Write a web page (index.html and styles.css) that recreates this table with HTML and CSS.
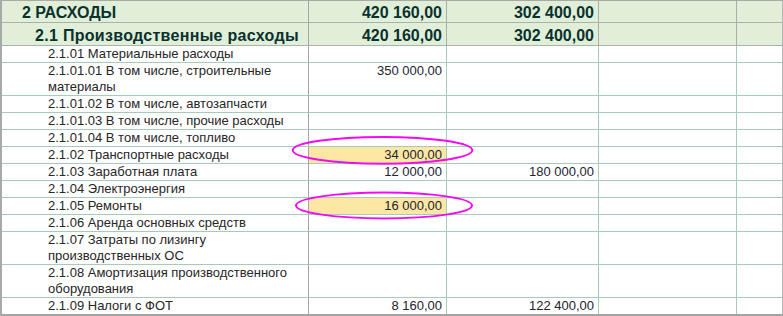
FILE: index.html
```html
<!DOCTYPE html>
<html lang="ru">
<head>
<meta charset="utf-8">
<link rel="stylesheet" href="styles.css">
</head>
<body>
<div class="sheet">
  <div class="grid">
    <div class="cell head lvl1 name c1">2 РАСХОДЫ</div>
    <div class="cell head lvl1 num">420 160,00</div>
    <div class="cell head lvl1 num">302 400,00</div>
    <div class="cell head lvl1"></div>
    <div class="cell head lvl1 last"></div>

    <div class="cell head lvl2 name c1">2.1 Производственные расходы</div>
    <div class="cell head lvl2 num">420 160,00</div>
    <div class="cell head lvl2 num">302 400,00</div>
    <div class="cell head lvl2"></div>
    <div class="cell head lvl2 last"></div>

    <div class="cell item c1">2.1.01 Материальные расходы</div>
    <div class="cell num"></div><div class="cell num"></div><div class="cell"></div><div class="cell last"></div>

    <div class="cell item c1">2.1.01.01 В том числе, строительные материалы</div>
    <div class="cell num">350 000,00</div><div class="cell num"></div><div class="cell"></div><div class="cell last"></div>

    <div class="cell item c1">2.1.01.02 В том числе, автозапчасти</div>
    <div class="cell num"></div><div class="cell num"></div><div class="cell"></div><div class="cell last"></div>

    <div class="cell item c1">2.1.01.03 В том числе, прочие расходы</div>
    <div class="cell num"></div><div class="cell num"></div><div class="cell"></div><div class="cell last"></div>

    <div class="cell item c1">2.1.01.04 В том числе, топливо</div>
    <div class="cell num"></div><div class="cell num"></div><div class="cell"></div><div class="cell last"></div>

    <div class="cell item c1">2.1.02 Транспортные расходы</div>
    <div class="cell num hl">34 000,00</div><div class="cell num"></div><div class="cell"></div><div class="cell last"></div>

    <div class="cell item c1">2.1.03 Заработная плата</div>
    <div class="cell num">12 000,00</div><div class="cell num">180 000,00</div><div class="cell"></div><div class="cell last"></div>

    <div class="cell item c1">2.1.04 Электроэнергия</div>
    <div class="cell num"></div><div class="cell num"></div><div class="cell"></div><div class="cell last"></div>

    <div class="cell item c1">2.1.05 Ремонты</div>
    <div class="cell num hl">16 000,00</div><div class="cell num"></div><div class="cell"></div><div class="cell last"></div>

    <div class="cell item c1">2.1.06 Аренда основных средств</div>
    <div class="cell num"></div><div class="cell num"></div><div class="cell"></div><div class="cell last"></div>

    <div class="cell item c1">2.1.07 Затраты по лизингу производственных ОС</div>
    <div class="cell num"></div><div class="cell num"></div><div class="cell"></div><div class="cell last"></div>

    <div class="cell item c1">2.1.08 Амортизация производственного оборудования</div>
    <div class="cell num"></div><div class="cell num"></div><div class="cell"></div><div class="cell last"></div>

    <div class="cell item c1 end">2.1.09 Налоги с ФОТ</div>
    <div class="cell num end">8 160,00</div><div class="cell num end">122 400,00</div><div class="cell end"></div><div class="cell last end"></div>
  </div>
  <svg class="marks" width="783" height="316" viewBox="0 0 783 316" aria-hidden="true">
    <ellipse cx="382.5" cy="150.3" rx="89.8" ry="13.4" fill="none" stroke="#f20af2" stroke-width="2"/>
    <ellipse cx="384" cy="205.5" rx="88" ry="12.9" fill="none" stroke="#f20af2" stroke-width="2"/>
  </svg>
</div>
</body>
</html>
```
FILE: styles.css
```css
html, body {
  margin: 0;
  padding: 0;
  background: #ffffff;
}

.sheet {
  position: relative;
  width: 783px;
  height: 316px;
  box-sizing: border-box;
  border-top: 1px solid #a9a9a9;
  border-left: 2px solid #a9a9a9;
  border-right: 1px solid #b4b4b4;
  border-bottom: 2px solid #a4a4a4;
  overflow: hidden;
  font-family: "Liberation Sans", Arial, sans-serif;
}

.grid {
  display: grid;
  grid-template-columns: 307px 138px 152px 138px 45px;
}

.cell {
  box-sizing: border-box;
  border-right: 1px solid #a6cbbd;
  border-bottom: 1px solid #a6cbbd;
  background: #ffffff;
  font-size: 13px;
  line-height: 16px;
  min-height: 17px;
  color: #262626;
  overflow: hidden;
}

.cell.c1 {
  border-right-color: #a8a2b2;
}

.cell.last {
  border-right: none;
}

.cell.end {
  border-bottom: none;
}

.item {
  padding-left: 46px;
  padding-right: 6px;
}

.num {
  text-align: right;
  padding-right: 4px;
  color: #232330;
}

.hl {
  background: #fce7a4;
}

.head {
  background: #e2efd8;
  border-bottom-color: #a7b3ab;
  border-right-color: #a7aeab;
  font-size: 16px;
  font-weight: bold;
  color: #08312f;
}

.head.c1 {
  border-right-color: #a7a4ae;
}

.lvl1 {
  height: 22px;
  line-height: 21px;
  padding-top: 1px;
}

.lvl2 {
  height: 23px;
  line-height: 21px;
  padding-top: 2px;
}

.lvl1.name {
  padding-left: 20px;
}

.lvl2.name {
  padding-left: 33px;
  letter-spacing: 0.3px;
}

.head.last {
  border-right: none;
}

.marks {
  position: absolute;
  left: -2px;
  top: -1px;
  pointer-events: none;
}
```
